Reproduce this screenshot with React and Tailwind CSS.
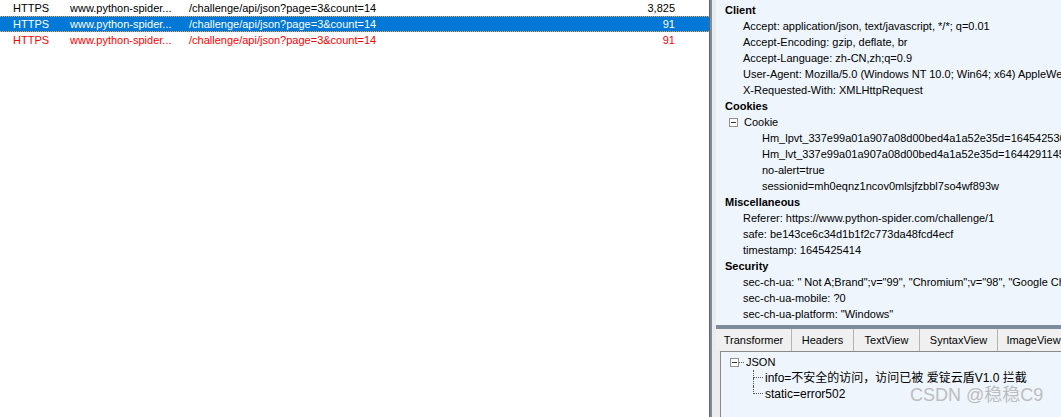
import React from "react";

const sessions = [
  { proto: "HTTPS", host: "www.python-spider...", url: "/challenge/api/json?page=3&count=14", size: "3,825", kind: "normal" },
  { proto: "HTTPS", host: "www.python-spider...", url: "/challenge/api/json?page=3&count=14", size: "91", kind: "selected" },
  { proto: "HTTPS", host: "www.python-spider...", url: "/challenge/api/json?page=3&count=14", size: "91", kind: "error" },
];

const groups = [
  {
    title: "Client",
    items: [
      "Accept: application/json, text/javascript, */*; q=0.01",
      "Accept-Encoding: gzip, deflate, br",
      "Accept-Language: zh-CN,zh;q=0.9",
      "User-Agent: Mozilla/5.0 (Windows NT 10.0; Win64; x64) AppleWebKit/537.36 (KHTML, like Gecko)",
      "X-Requested-With: XMLHttpRequest",
    ],
  },
  { title: "Cookies", cookie: true },
  {
    title: "Miscellaneous",
    items: [
      "Referer: https://www.python-spider.com/challenge/1",
      "safe: be143ce6c34d1b1f2c773da48fcd4ecf",
      "timestamp: 1645425414",
    ],
  },
  {
    title: "Security",
    items: [
      'sec-ch-ua: " Not A;Brand";v="99", "Chromium";v="98", "Google Chrome";v="98"',
      "sec-ch-ua-mobile: ?0",
      'sec-ch-ua-platform: "Windows"',
    ],
  },
];

const cookies = [
  "Hm_lpvt_337e99a01a907a08d00bed4a1a52e35d=1645425367",
  "Hm_lvt_337e99a01a907a08d00bed4a1a52e35d=1644291145",
  "no-alert=true",
  "sessionid=mh0eqnz1ncov0mlsjfzbbl7so4wf893w",
];

const tabs = [
  { name: "Transformer", w: "w-[76px]" },
  { name: "Headers", w: "w-[62px]" },
  { name: "TextView", w: "w-[66px]" },
  { name: "SyntaxView", w: "w-[78px]" },
  { name: "ImageView", w: "w-[72px]" },
];

function MinusBox() {
  return (
    <span className="flex h-[9px] w-[9px] shrink-0 items-center justify-center border border-[#919191] bg-white">
      <span className="h-px w-[5px] bg-[#333]" />
    </span>
  );
}

function SessionRow({ s }) {
  const tone =
    s.kind === "selected"
      ? "bg-[#0078d7] text-white border-y border-dotted border-[#f2a94e]"
      : s.kind === "error"
      ? "text-[#ff0000] border-y border-transparent"
      : "text-black border-y border-transparent";
  return (
    <div className={`flex h-[16px] items-center whitespace-nowrap ${tone}`}>
      <span className="w-[70px] shrink-0 pl-[13px]">{s.proto}</span>
      <span className="w-[119px] shrink-0">{s.host}</span>
      <span className="w-[416px] shrink-0">{s.url}</span>
      <span className="w-[70px] shrink-0 text-right">{s.size}</span>
    </div>
  );
}

export default function App() {
  return (
    <div
      className="flex h-[417px] w-[1061px] overflow-hidden bg-white text-[11px] leading-[16px] text-black"
      style={{ fontFamily: '"Liberation Sans", "Noto Sans CJK SC", sans-serif' }}
    >
      {/* session list */}
      <div className="w-[709px] shrink-0 bg-white">
        {sessions.map((s, i) => (
          <SessionRow key={i} s={s} />
        ))}
      </div>

      {/* vertical splitter */}
      <div className="w-[3px] shrink-0 border-l border-[#56677a] bg-[#7d8c9b]" />

      {/* inspectors */}
      <div className="flex min-w-0 flex-1 flex-col bg-[#ececec] pl-[4px]">
        <div className="h-[325px] shrink-0 overflow-hidden bg-[#eef5fd] pt-[2px]">
          {groups.map((g) => (
            <div key={g.title}>
              <div className="h-[16px] whitespace-nowrap pl-[9px] font-bold">{g.title}</div>
              {g.items &&
                g.items.map((t) => (
                  <div key={t} className="h-[16px] whitespace-nowrap pl-[27px]">
                    {t}
                  </div>
                ))}
              {g.cookie && (
                <>
                  <div className="flex h-[16px] items-center gap-[6px] whitespace-nowrap pl-[13px]">
                    <MinusBox />
                    <span>Cookie</span>
                  </div>
                  {cookies.map((c) => (
                    <div key={c} className="h-[16px] whitespace-nowrap pl-[46px]">
                      {c}
                    </div>
                  ))}
                </>
              )}
            </div>
          ))}
        </div>

        {/* horizontal splitter */}
        <div className="h-[4px] shrink-0 bg-[#7d8c9b]" />

        {/* tabs */}
        <div className="flex h-[22px] shrink-0 items-stretch bg-[#f0f0f0] text-[11px]">
          {tabs.map((t) => (
            <div
              key={t.name}
              className={`${t.w} flex shrink-0 items-center justify-center whitespace-nowrap border-r border-[#b4b4b4]`}
            >
              {t.name}
            </div>
          ))}
        </div>

        {/* transformer / json tree */}
        <div className="relative ml-[4px] flex-1 border-l border-t border-[#8a8a8a] bg-[#eef5fd] pl-[9px] pt-[2px]">
          <div className="flex h-[16px] items-center whitespace-nowrap">
            <MinusBox />
            <span className="w-[5px] border-b border-dotted border-[#555]" />
            <span className="pl-[2px]">JSON</span>
          </div>
          <div className="pl-[23px]">
            {[
              { t: "info=不安全的访问，访问已被 爱锭云盾V1.0 拦截", last: false },
              { t: "static=error502", last: true },
            ].map((n) => (
              <div key={n.t} className="flex h-[16px] items-stretch whitespace-nowrap">
                <span className="flex w-[10px] shrink-0 flex-col">
                  <span className="h-[8px] border-b border-l border-dotted border-[#555]" />
                  <span className={`flex-1 border-l border-dotted ${n.last ? "border-transparent" : "border-[#555]"}`} />
                </span>
                <span className="flex items-center pl-[2px] text-[12px]">{n.t}</span>
              </div>
            ))}
          </div>

          {/* CSDN watermark */}
          <div className="pointer-events-none absolute left-[189px] top-[35px] whitespace-nowrap text-[18px] text-[#bdbdbd]">
            CSDN @稳稳C9
          </div>
        </div>
      </div>
    </div>
  );
}
